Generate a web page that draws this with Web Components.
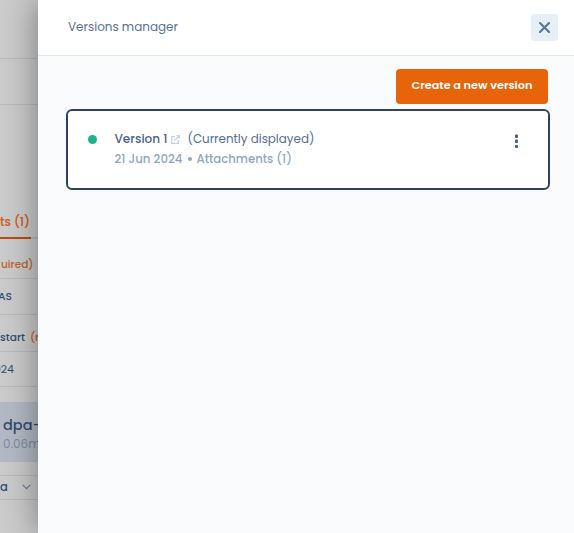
<!DOCTYPE html>
<html lang="en">
<head>
<meta charset="utf-8">
<title>Versions manager</title>
<style>
body{margin:0;width:574px;height:533px;overflow:hidden;font-family:Poppins,Inter,"Open Sans",sans-serif;background:#cbcbcb}
</style>
</head>
<body>
<app-shell>
  <page-behind slot="page"></page-behind>
  <versions-drawer slot="drawer" heading="Versions manager">
    <action-button slot="actions"><fit-text width="121">Create a new version</fit-text></action-button>
    <version-card>
      <fit-text slot="name" width="53" class="name">Version 1</fit-text>
      <fit-text slot="status" width="127">(Currently displayed)</fit-text>
      <fit-text slot="date" width="68">21 Jun 2024</fit-text>
      <fit-text slot="files" width="95.5">Attachments (1)</fit-text>
    </version-card>
  </versions-drawer>
</app-shell>
<script>
// Text run whose type size is scaled so that it fills a given width.
class FitText extends HTMLElement {
  connectedCallback() {
    if (!this.shadowRoot) this.attachShadow({mode:'open'}).innerHTML =
      '<style>:host{display:inline-block;white-space:nowrap}span{display:inline-block}</style><span><slot></slot></span>';
    requestAnimationFrame(() => this.fit());
    this.fit();
  }
  fit() {
    const s = this.shadowRoot.querySelector('span'), w = +this.getAttribute('width');
    s.style.fontSize = '';
    this.style.width = w + 'px';
    const natural = s.getBoundingClientRect().width;
    if (natural) s.style.fontSize = parseFloat(getComputedStyle(this).fontSize) * w / natural + 'px';
  }
}
const define = (name, html, setup) => customElements.define(name, class extends HTMLElement {
  connectedCallback() {
    if (this.shadowRoot) return;
    const t = document.createElement('template');
    t.innerHTML = html;
    this.attachShadow({mode:'open'}).append(t.content.cloneNode(true));
    if (setup) setup(this, this.shadowRoot);
  }
});

define('app-shell', `<style>
:host{display:flex;width:574px;height:533px;overflow:hidden}
.page{flex:0 0 38px;overflow:hidden}
.drawer{flex:1;display:flex;position:relative;box-shadow:0 0 32px rgba(0,0,0,.42)}
</style><div class="page"><slot name="page"></slot></div><div class="drawer"><slot name="drawer"></slot></div>`);

define('page-behind', `<style>
:host{display:block;width:38px;height:533px;overflow:hidden;background:#cbcbcb;color:#344b70;font-size:11px;font-weight:500}
div{box-sizing:border-box;display:flex;align-items:center;white-space:nowrap;border-bottom:1px solid #b5bac3;overflow:hidden}
.tab{height:36px;color:#c95a1c;font-size:12px;padding-top:5px;border:0}
.line{height:2px;border:0;background:linear-gradient(90deg,#c04c06 31px,#b5bac3 31px)}
.req{color:#c26030;font-weight:500}
.file{height:60px;border:0;background:#b4bac5;flex-direction:column;align-items:flex-start;padding:13px 0 0 3px}
.file b{font-weight:500;font-size:14.5px;line-height:20px}
.file span{font-weight:400;font-size:12px;line-height:17px;color:#7e8da3}
</style>
<div style="height:59px"></div><div style="height:46px"></div>
<div style="height:96px;border:0"></div>
<div class="tab"><fit-text width="30">ts (1)</fit-text></div>
<div class="line"></div>
<div style="height:40px;padding:12px 0 0 1px" class="req"><fit-text width="32.5">uired)</fit-text></div>
<div style="height:36px"><fit-text width="14" style="margin-left:-2px">AS</fit-text></div>
<div style="height:37px;gap:5px;padding-top:9px"><fit-text width="25">start</fit-text><span class="req" style="font-size:10.5px">(r</span></div>
<div style="height:35px;font-weight:400"><fit-text width="20" style="margin-left:-6px">024</fit-text></div>
<div style="height:15px;border:0"></div>
<div class="file"><b>dpa-</b><span>0.06m</span></div>
<div style="height:14px"></div>
<div style="height:24px;gap:14px;font-size:11.5px;padding-bottom:1px">a<svg width="9" height="6" viewBox="0 0 9 6" fill="none" stroke="#687a94" stroke-width="1.2"><path d="M.7.8 4.5 4.6 8.3.8"/></svg></div>`);

define('close-button', `<style>
:host{display:grid;place-items:center;width:27px;height:27px;border-radius:4px;background:#e6eff7}
svg{display:block}
</style><svg width="13" height="13" viewBox="0 0 13 13" fill="none" stroke="#5c7590" stroke-width="2.1" stroke-linecap="round"><path d="m2 2 9 9M11 2 2 11"/></svg>`);

define('versions-drawer', `<style>
:host{display:flex;flex-direction:column;flex:1;background:#fafbfd;min-width:0}
header{box-sizing:border-box;height:56px;display:flex;align-items:center;justify-content:space-between;padding:0 16px 1px 30px;background:#fff;border-bottom:1px solid #e0e8f0;color:#597194;font-size:13px}
main{display:flex;flex-direction:column;padding:13px 24px 0 28px;gap:5px}
.actions{display:flex;justify-content:flex-end;padding-right:2px}
</style><header><fit-text width="110"></fit-text><close-button></close-button></header>
<main><div class="actions"><slot name="actions"></slot></div><slot></slot></main>`,
(host, root) => {
  const t = root.querySelector('fit-text');
  t.textContent = host.getAttribute('heading');
  if (t.fit) t.fit();
});

define('action-button', `<style>
:host{box-sizing:border-box;display:flex;align-items:center;justify-content:center;width:152px;height:35px;padding-bottom:2px;border-radius:4px;background:#e8640a;color:#fff;font-size:11px;font-weight:600}
</style><slot></slot>`);

define('version-card', `<style>
:host{box-sizing:border-box;display:flex;width:484px;height:81px;border:2px solid #2f4260;border-radius:6px;background:#fff;padding:18px 29px 0 20px}
.dot{width:9px;height:9px;border-radius:50%;background:#1bb488;margin-top:6px}
.text{margin-left:17.5px;flex:1}
.row{display:flex;align-items:center;height:20px}
.one{font-size:12px;color:#566e92}
.two{font-size:11.5px;font-weight:500;color:#8ea7c5}
.one ::slotted([slot=name]){font-weight:500;color:#4a6289}
.link{margin:0 8px 0 3px}
.bullet{width:4px;height:4px;border-radius:50%;background:#8ea7c5;margin:0 5px}
.menu{margin-top:4.5px;width:5px;height:15px}
svg{display:block}
</style>
<div class="dot"></div>
<div class="text">
<div class="row one"><slot name="name"></slot><svg class="link" width="9" height="9" viewBox="0 0 9 9" fill="none" stroke="#c3d1e1" stroke-width="1.2"><path d="M4 1.5H.7v6.8h6.6V5M5.4.6h3v3M8.2.8 3.5 5.5"/></svg><slot name="status"></slot></div>
<div class="row two"><slot name="date"></slot><i class="bullet"></i><slot name="files"></slot></div>
</div>
<svg class="menu" width="5" height="15" viewBox="0 0 5 15" fill="#425b88"><rect x="1" y=".5" width="3" height="3.5" rx="1"/><rect x="1" y="5.5" width="3" height="3.5" rx="1"/><rect x="1" y="11" width="3" height="3" rx="1"/></svg>`);
customElements.define('fit-text', FitText);
</script>
</body>
</html>
